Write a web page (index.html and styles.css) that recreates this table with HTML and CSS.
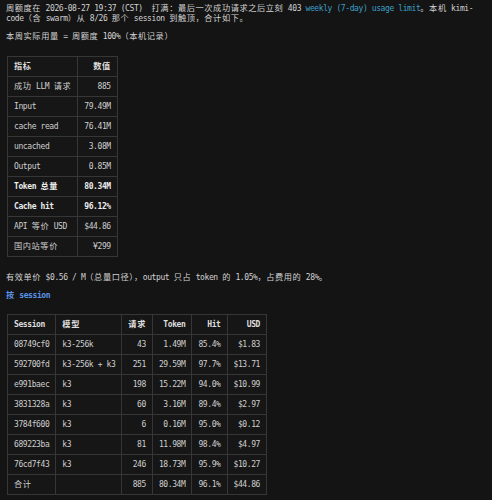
FILE: index.html
```html
<!DOCTYPE html>
<html lang="zh">
<head>
<meta charset="utf-8">
<title>周额度</title>
<link rel="stylesheet" href="styles.css">
</head>
<body>
<main class="doc">
<p class="intro"><span class="z">周额度在</span> 2026-08-27 19:37 (CST) &nbsp;<span class="z">打满：最后一次成功请求之后立刻</span> 403 <a class="lnk">weekly (7-day) usage limit</a><span class="z">。本机</span> kimi-code<span class="z">（含</span> swarm<span class="z">）从</span> 8/26 <span class="z">那个</span> session <span class="z">到触顶，合计如下。</span></p>
<p class="total"><span class="z">本周实际用量</span> = <span class="z">周额度</span> 100%<span class="z">（本机记录）</span></p>

<table class="t t1">
<thead>
<tr><th class="l"><span class="z">指标</span></th><th class="r"><span class="z">数值</span></th></tr>
</thead>
<tbody>
<tr><td class="l"><span class="z">成功</span> LLM <span class="z">请求</span></td><td class="r">885</td></tr>
<tr><td class="l">Input</td><td class="r">79.49M</td></tr>
<tr><td class="l">cache read</td><td class="r">76.41M</td></tr>
<tr><td class="l">uncached</td><td class="r">3.08M</td></tr>
<tr><td class="l">Output</td><td class="r">0.85M</td></tr>
<tr class="b"><td class="l">Token <span class="z">总量</span></td><td class="r">80.34M</td></tr>
<tr class="b"><td class="l">Cache hit</td><td class="r">96.12%</td></tr>
<tr><td class="l">API <span class="z">等价</span> USD</td><td class="r">$44.86</td></tr>
<tr><td class="l"><span class="z">国内站等价</span></td><td class="r">¥299</td></tr>
</tbody>
</table>

<p class="rate"><span class="z">有效单价</span> $0.56 / M<span class="z">（总量口径），</span>output <span class="z">只占</span> token <span class="z">的</span> 1.05%<span class="z">，占费用的</span> 28%<span class="z">。</span></p>

<h3 class="sec"><span class="z">按</span> session</h3>

<table class="t t2">
<thead>
<tr><th class="l">Session</th><th class="l"><span class="z">模型</span></th><th class="r"><span class="z">请求</span></th><th class="r">Token</th><th class="r">Hit</th><th class="r">USD</th></tr>
</thead>
<tbody>
<tr><td class="l">08749cf0</td><td class="l">k3-256k</td><td class="r">43</td><td class="r">1.49M</td><td class="r">85.4%</td><td class="r">$1.83</td></tr>
<tr><td class="l">592700fd</td><td class="l">k3-256k + k3</td><td class="r">251</td><td class="r">29.59M</td><td class="r">97.7%</td><td class="r">$13.71</td></tr>
<tr><td class="l">e991baec</td><td class="l">k3</td><td class="r">198</td><td class="r">15.22M</td><td class="r">94.0%</td><td class="r">$10.99</td></tr>
<tr><td class="l">3831328a</td><td class="l">k3</td><td class="r">60</td><td class="r">3.16M</td><td class="r">89.4%</td><td class="r">$2.97</td></tr>
<tr><td class="l">3784f600</td><td class="l">k3</td><td class="r">6</td><td class="r">0.16M</td><td class="r">95.0%</td><td class="r">$0.12</td></tr>
<tr><td class="l">689223ba</td><td class="l">k3</td><td class="r">81</td><td class="r">11.98M</td><td class="r">98.4%</td><td class="r">$4.97</td></tr>
<tr><td class="l">76cd7f43</td><td class="l">k3</td><td class="r">246</td><td class="r">18.73M</td><td class="r">95.9%</td><td class="r">$10.27</td></tr>
<tr><td class="l"><span class="z">合计</span></td><td class="l"></td><td class="r">885</td><td class="r">80.34M</td><td class="r">96.1%</td><td class="r">$44.86</td></tr>
</tbody>
</table>
</main>
</body>
</html>
```

FILE: styles.css
```css
html, body {
  margin: 0;
  background: #141414;
}

body {
  color: #d2d2d2;
  font-family: "DejaVu Sans Mono", "Noto Sans CJK SC", monospace;
  font-size: 8px;
  letter-spacing: -0.4px;
  line-height: 10px;
}

.doc {
  padding: 4px 6px 0 6px;
}

.z {
  font-family: "Noto Sans CJK SC", sans-serif;
  font-size: 8.2px;
  letter-spacing: 0.6px;
  line-height: 0;
}

p {
  margin: 0;
}

.intro {
  margin-bottom: 8px;
}

.total {
  margin-bottom: 14px;
}

.lnk {
  color: #3d9fc6;
  text-decoration: none;
}

.rate {
  margin-top: 16px;
  margin-bottom: 8px;
}

.sec {
  margin: 0 0 13px 0;
  font-size: 8px;
  line-height: 10px;
  font-weight: bold;
  color: #5b92e8;
}

.t {
  border-collapse: collapse;
  margin-left: 1px;
  background: #161616;
}

.t th,
.t td {
  border: 1px solid #363636;
  padding: 0 6px;
  line-height: 19px;
  white-space: nowrap;
  color: #cfcfcf;
}

.t th {
  font-weight: bold;
  color: #dedede;
}

.t .l {
  text-align: left;
}

.t .r {
  text-align: right;
}

.t tr.b td {
  font-weight: bold;
  color: #ececec;
}
```
